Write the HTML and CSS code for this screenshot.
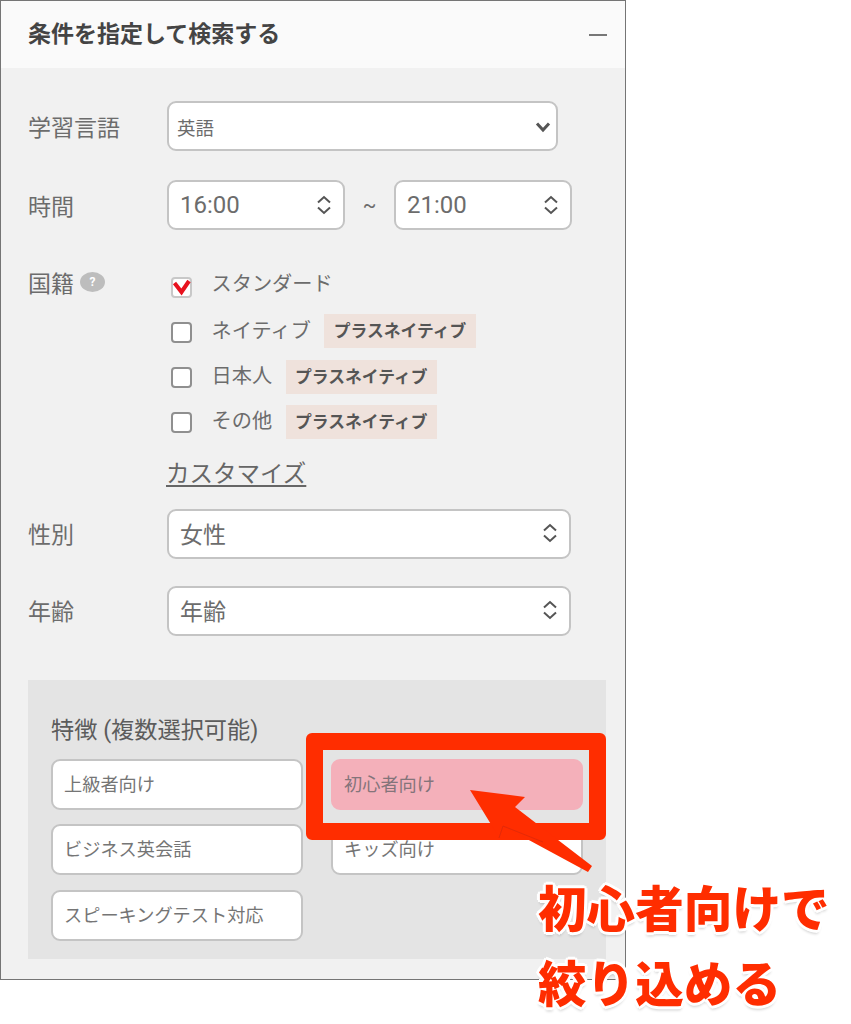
FILE: index.html
```html
<!DOCTYPE html>
<html lang="ja">
<head>
<meta charset="utf-8">
<title>条件を指定して検索する</title>
<link rel="stylesheet" href="styles.css">
</head>
<body>
<div class="stage">
  <section class="panel">
    <header class="panel-head">
      <h2 class="panel-title">条件を指定して検索する</h2>
      <span class="collapse"></span>
    </header>
    <div class="panel-body">
      <div class="row row-lang">
        <div class="label">学習言語</div>
        <div class="field field-lang"><span class="small-val">英語</span>
          <svg class="chev" width="16" height="12" viewBox="0 0 16 12"><path d="M2 2.500 8 9l6-6.500" fill="none" stroke="#555" stroke-width="3"/></svg>
        </div>
      </div>
      <div class="row row-time">
        <div class="label">時間</div>
        <div class="field field-time"><span>16:00</span>
          <svg class="updown" width="16" height="22" viewBox="0 0 16 22"><path d="M2 8.500 8 3l6 5.500M2 13.500 8 19l6-5.500" fill="none" stroke="#555" stroke-width="2"/></svg>
        </div>
        <span class="tilde">~</span>
        <div class="field field-time"><span>21:00</span>
          <svg class="updown" width="16" height="22" viewBox="0 0 16 22"><path d="M2 8.500 8 3l6 5.500M2 13.500 8 19l6-5.500" fill="none" stroke="#555" stroke-width="2"/></svg>
        </div>
      </div>
      <div class="row row-nation">
        <div class="label label-help">国籍<span class="help">?</span></div>
        <div class="checks">
          <div class="check-row first">
            <span class="box checked"><svg width="20" height="18" viewBox="0 0 20 18"><path d="M2.500 5 9.500 14 17 3" fill="none" stroke="#e8121e" stroke-width="4"/></svg></span>
            <span class="check-text">スタンダード</span>
          </div>
          <div class="check-row">
            <span class="box"></span><span class="check-text">ネイティブ</span><span class="tag">プラスネイティブ</span>
          </div>
          <div class="check-row">
            <span class="box"></span><span class="check-text">日本人</span><span class="tag">プラスネイティブ</span>
          </div>
          <div class="check-row">
            <span class="box"></span><span class="check-text">その他</span><span class="tag">プラスネイティブ</span>
          </div>
          <a class="customize">カスタマイズ</a>
        </div>
      </div>
      <div class="row row-gender">
        <div class="label">性別</div>
        <div class="field field-wide"><span>女性</span>
          <svg class="updown" width="16" height="22" viewBox="0 0 16 22"><path d="M2 8.500 8 3l6 5.500M2 13.500 8 19l6-5.500" fill="none" stroke="#555" stroke-width="2"/></svg>
        </div>
      </div>
      <div class="row row-age">
        <div class="label">年齢</div>
        <div class="field field-wide"><span>年齢</span>
          <svg class="updown" width="16" height="22" viewBox="0 0 16 22"><path d="M2 8.500 8 3l6 5.500M2 13.500 8 19l6-5.500" fill="none" stroke="#555" stroke-width="2"/></svg>
        </div>
      </div>
      <div class="features">
        <div class="features-title">特徴 (複数選択可能)</div>
        <div class="feature-grid">
          <div class="feature">上級者向け</div>
          <div class="feature selected">初心者向け</div>
          <div class="feature">ビジネス英会話</div>
          <div class="feature">キッズ向け</div>
          <div class="feature">スピーキングテスト対応</div>
        </div>
      </div>
    </div>
  </section>
  <div class="highlight"></div>
  <svg class="arrow" width="160" height="100" viewBox="0 0 160 100"><path d="M10 10 65 17 55 27 132 86 128 92 43 46 40 59Z" fill="#ff2d00"/><path d="M39 58 43 46 83 62" fill="none" stroke="#d8280a" stroke-width=".7"/></svg>
  <div class="callout">初心者向けで<br>絞り込める</div>
</div>
</body>
</html>
```
FILE: styles.css
```css
* { box-sizing: border-box; }
html, body { margin: 0; padding: 0; background: #fff; }
body { font-family: Roboto, "Noto Sans CJK JP", sans-serif; color: #666; }
.stage { position: relative; width: 851px; height: 1024px; overflow: hidden; }
.panel { width: 626px; height: 980px; border: 1px solid #757575; background: #f1f1f1; }
.panel-head { height: 67px; background: #fafafa; display: flex; align-items: center; justify-content: space-between; padding: 0 18px 0 27px; }
.panel-title { margin: 0; font-size: 23px; font-weight: 700; color: #444; line-height: 1; }
.collapse { width: 18px; height: 2px; background: #777; }
.panel-body { padding: 0 18px 0 27px; }
.row { display: flex; }
.label { width: 139px; font-size: 23px; line-height: 34px; color: #6c6c6c; flex: none; padding-top: 5px; }
.row-lang { margin-top: 33px; align-items: center; }
.row-time { margin-top: 29px; align-items: center; }
.row-nation { margin-top: 39px; }
.row-gender { margin-top: 18px; align-items: center; }
.row-age { margin-top: 27px; align-items: center; }
.field { height: 50px; background: #fff; border: 2px solid #c4c4c4; border-radius: 9px; display: flex; align-items: center; justify-content: space-between; font-size: 23px; color: #6c6c6c; padding: 0 11px 0 11px; }
.field-lang { width: 391px; padding: 2px 5px 0 8px; }
.small-val { font-size: 18.500px; }
.field-time { width: 178px; font-size: 24px; }
.field-wide { width: 404px; padding-bottom: 2px; }
.tilde { width: 49px; text-align: center; font-size: 20px; color: #6c6c6c; }
.label.label-help { display: flex; align-items: flex-start; padding-top: 0; line-height: 32px; }
.help { width: 25px; height: 20px; border-radius: 50%; background: #bdbdbd; color: #fff; font-size: 12px; font-weight: 700; line-height: 20px; text-align: center; margin: 3px 0 0 6px; }
.checks { display: flex; flex-direction: column; align-items: flex-start; }
.check-row { display: flex; align-items: center; height: 34px; margin-top: 11.300px; padding-left: 4px; }
.check-row.first { margin-top: 0; }
.box { width: 21px; height: 21px; border: 2px solid #8f8f8f; border-radius: 4px; background: #fff; margin-right: 19.500px; flex: none; position: relative; top: 1px; }
.box.checked { border-color: #c8c8c8; display: flex; align-items: center; justify-content: center; overflow: visible; }
.box.checked svg { flex: none; }
.check-text { font-size: 20.200px; color: #6c6c6c; margin-right: 13.500px; position: relative; top: -2px; }
.first .check-text { top: -4px; }
.tag { height: 34px; padding: 0 9.500px; background: #efe2dc; color: #555; font-size: 16.800px; font-weight: 700; line-height: 34px; white-space: nowrap; }
.customize { margin: 18px 0 0 -1px; font-size: 23.500px; line-height: 34px; color: #666; text-decoration: underline; text-underline-offset: 3px; }
.features { margin-top: 44px; height: 279px; width: 578px; background: #e4e4e4; padding: 35px 23px 0; }
.features-title { font-size: 23.200px; line-height: 30px; color: #5c5c5c; }
.feature-grid { margin-top: 14px; display: grid; grid-template-columns: 252px 252px; column-gap: 28px; row-gap: 14.500px; }
.feature { height: 51px; background: #fff; border: 2px solid #c4c4c4; border-radius: 9px; font-size: 18.200px; line-height: 48px; padding-left: 11px; color: #757575; }
.feature.selected { background: #f4b0ba; border-color: #f4b0ba; color: #84747a; }
.highlight { position: absolute; left: 306px; top: 733px; width: 300px; height: 107px; border: 17px solid #ff2d00; border-radius: 6px; }
.arrow { position: absolute; left: 460px; top: 780px; }
.callout { position: absolute; left: 538px; top: 873px; font-size: 48.600px; line-height: 75px; font-weight: 900; color: #ff2d00; white-space: nowrap; text-shadow: 3px 0 0 #fff, -3px 0 0 #fff, 0 3px 0 #fff, 0 -3px 0 #fff, 2px 2px 0 #fff, -2px 2px 0 #fff, 2px -2px 0 #fff, -2px -2px 0 #fff, 0 4px 3px rgba(0,0,0,.2); }
```
